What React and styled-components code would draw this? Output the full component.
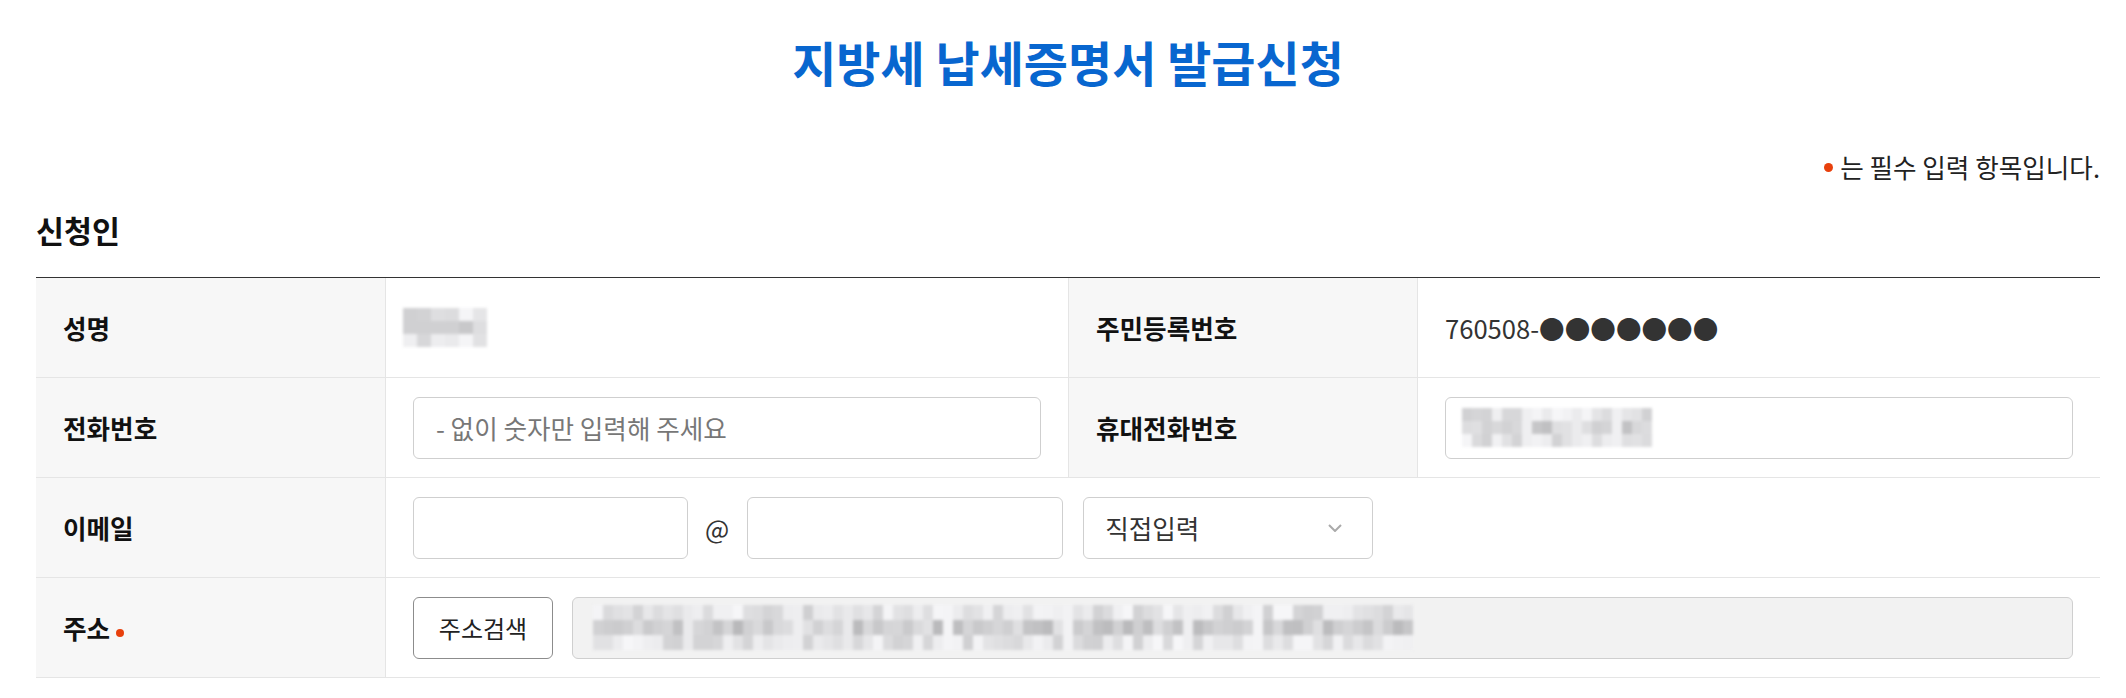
import React from "react";
import styled, { createGlobalStyle } from "styled-components";

const GlobalStyle = createGlobalStyle`
  body {
    margin: 0;
    background: #fff;
    font-family: "Noto Sans CJK KR", "Noto Sans", sans-serif;
    color: #333;
  }
  * { box-sizing: border-box; }
`;

const Page = styled.div`
  width: 2064px;
  margin-left: 36px;
`;

const Title = styled.h1`
  margin: 0;
  padding-top: 31px;
  height: 91px;
  line-height: 60px;
  text-align: center;
  font-size: 48px;
  font-weight: 700;
  color: #0866cf;
`;

const RequiredNote = styled.p`
  margin: 59px 0 0;
  display: flex;
  justify-content: flex-end;
  align-items: center;
  gap: 7px;
  font-size: 25.6px;
  line-height: 34px;
  color: #222;
`;

const Dot = styled.span`
  display: inline-block;
  width: ${p => p.$size || 9}px;
  height: ${p => p.$size || 9}px;
  border-radius: 50%;
  background: #e8400c;
  flex: none;
  ${p => p.$low && "margin-top: 10px;"}
`;

const Heading = styled.h2`
  margin: 26px 0 0;
  font-size: 30.4px;
  line-height: 40px;
  font-weight: 700;
  color: #111;
`;

const Table = styled.div`
  margin-top: 27px;
  display: grid;
  grid-template-columns: 350px 682px 350px 682px;
  border-top: 1px solid #333;
`;

const Label = styled.div`
  display: flex;
  align-items: center;
  gap: 6px;
  min-height: 100px;
  padding: 0 27px;
  background: #f7f7f7;
  border-bottom: 1px solid #e5e5e5;
  border-right: 1px solid #e5e5e5;
  ${p => p.$inner && "border-left: 1px solid #e5e5e5;"}
  font-size: 25.6px;
  font-weight: 700;
  color: #111;
`;

const Value = styled.div`
  display: flex;
  align-items: center;
  min-height: 100px;
  padding: 0 27px;
  border-bottom: 1px solid #e5e5e5;
  grid-column: span ${p => p.$span || 1};
  font-size: 25.6px;
  color: #333;
`;

const TextInput = styled.input`
  height: 62px;
  width: ${p => (p.$width ? `${p.$width}px` : "100%")};
  flex: none;
  border: 1px solid #cfcfcf;
  border-radius: 6px;
  padding: 0 22px;
  font-family: inherit;
  font-size: 25.6px;
  color: #333;
  background: #fff;
  outline: none;
  &::placeholder { color: #777; }
`;

const FieldBox = styled.div`
  height: 62px;
  flex: 1;
  display: flex;
  align-items: center;
  border: 1px solid #cfcfcf;
  border-radius: 6px;
  padding: 0 ${p => p.$pad || 16}px;
  background: ${p => (p.$readonly ? "#f2f2f2" : "#fff")};
`;

const At = styled.span`
  margin: 0 18px 0 17px;
  font-size: 25.6px;
  color: #333;
`;

const SelectBox = styled.div`
  width: 290px;
  height: 62px;
  margin-left: 20px;
  display: flex;
  align-items: center;
  justify-content: space-between;
  padding: 0 30px 0 21px;
  border: 1px solid #cfcfcf;
  border-radius: 6px;
  font-size: 25.6px;
  color: #333;
`;

const SearchButton = styled.button`
  width: 140px;
  height: 62px;
  flex: none;
  margin-right: 19px;
  border: 1px solid #8c8c8c;
  border-radius: 6px;
  background: #fff;
  font-family: inherit;
  font-size: 24px;
  color: #222;
`;

const MosaicGrid = styled.div`
  display: grid;
  grid-template-columns: repeat(${p => p.$cols}, ${p => p.$cell}px);
  grid-auto-rows: ${p => p.$rowH}px;
  filter: blur(1.5px);
  margin-left: ${p => p.$shift || 0}px;
`;

const Cell = styled.div``;

const rand = (i, seed) => {
  const x = Math.sin(i * 12.9898 + seed * 78.233) * 43758.5453;
  return x - Math.floor(x);
};

const Mosaic = ({ cols, rows, cell, rowH, seed, gaps = [], shift, base = 185 }) => {
  const cells = [];
  for (let r = 0; r < rows; r++) {
    for (let c = 0; c < cols; c++) {
      const edge = r === 0 || r === rows - 1;
      let v = base + Math.round(rand(r * cols + c, seed) * 40) + (edge ? 22 : 0);
      if (gaps.includes(c)) v = 232 + Math.round(rand(c, seed + 3) * 12);
      v = Math.min(v, 246);
      cells.push(
        <Cell key={`${r}-${c}`} style={{ background: `rgb(${v},${v},${v + 2})` }} />
      );
    }
  }
  return (
    <MosaicGrid $cols={cols} $cell={cell} $rowH={rowH} $shift={shift}>
      {cells}
    </MosaicGrid>
  );
};

const Chevron = () => (
  <svg width="14" height="8" viewBox="0 0 14 8" fill="none">
    <polyline points="1,1 7,7 13,1" stroke="#aaa" strokeWidth="2" />
  </svg>
);

export default function App() {
  return (
    <>
      <GlobalStyle />
      <Page>
        <Title>지방세 납세증명서 발급신청</Title>
        <RequiredNote>
          <Dot />
          는 필수 입력 항목입니다.
        </RequiredNote>
        <Heading>신청인</Heading>
        <Table>
          <Label>성명</Label>
          <Value>
            <Mosaic cols={6} rows={3} cell={14} rowH={13} seed={2} shift={-10} />
          </Value>
          <Label $inner>주민등록번호</Label>
          <Value>760508-●●●●●●●</Value>

          <Label>전화번호</Label>
          <Value>
            <TextInput placeholder="- 없이 숫자만 입력해 주세요" />
          </Value>
          <Label $inner>휴대전화번호</Label>
          <Value>
            <FieldBox>
              <Mosaic cols={19} rows={3} cell={10} rowH={13} seed={5} gaps={[6, 11, 15]} />
            </FieldBox>
          </Value>

          <Label>이메일</Label>
          <Value $span={3}>
            <TextInput $width={275} />
            <At>@</At>
            <TextInput $width={316} />
            <SelectBox>
              직접입력
              <Chevron />
            </SelectBox>
          </Value>

          <Label>
            주소
            <Dot $size={8} $low />
          </Label>
          <Value $span={3}>
            <SearchButton>주소검색</SearchButton>
            <FieldBox $readonly $pad={20}>
              <Mosaic
                cols={82}
                rows={3}
                cell={10}
                rowH={15}
                seed={9}
                gaps={[9, 20, 25, 35, 47, 59, 66]}
              />
            </FieldBox>
          </Value>
        </Table>
      </Page>
    </>
  );
}
